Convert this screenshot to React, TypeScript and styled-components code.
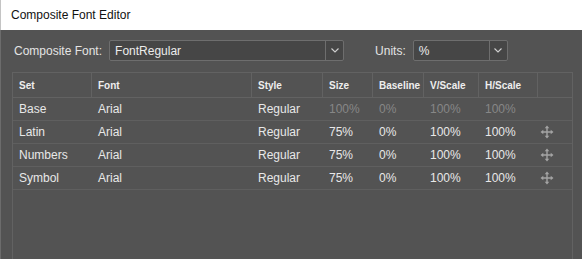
import styled, { createGlobalStyle } from "styled-components"

const GlobalStyle = createGlobalStyle`
	html, body {
		margin: 0;
		padding: 0;
		background: #535353;
		font-family: "Liberation Sans", Arial, sans-serif;
	}
`

type Row = {
	set: string
	font: string
	style: string
	size: string
	baseline: string
	vScale: string
	hScale: string
	locked?: boolean
}

const rows: Row[] = [
	{ set: "Base", font: "Arial", style: "Regular", size: "100%", baseline: "0%", vScale: "100%", hScale: "100%", locked: true },
	{ set: "Latin", font: "Arial", style: "Regular", size: "75%", baseline: "0%", vScale: "100%", hScale: "100%" },
	{ set: "Numbers", font: "Arial", style: "Regular", size: "75%", baseline: "0%", vScale: "100%", hScale: "100%" },
	{ set: "Symbol", font: "Arial", style: "Regular", size: "75%", baseline: "0%", vScale: "100%", hScale: "100%" },
]

const headers = ["Set", "Font", "Style", "Size", "Baseline", "V/Scale", "H/Scale", ""]

function Chevron() {
	return (
		<svg width="8" height="5" viewBox="0 0 8 5">
			<path d="M0.5 0.5 L4 4 L7.5 0.5" fill="none" stroke="#d0d0d0" strokeWidth="1.1" />
		</svg>
	)
}

function MoveIcon() {
	return (
		<svg width="14" height="14" viewBox="0 0 14 14">
			<path d="M7 3 V11 M3 7 H11" stroke="#a4a4a4" strokeWidth="1.4" fill="none" />
			<g fill="#a4a4a4">
				<path d="M7 0.5 L9.3 3.3 H4.7 Z" />
				<path d="M7 13.5 L9.3 10.7 H4.7 Z" />
				<path d="M0.5 7 L3.3 4.7 V9.3 Z" />
				<path d="M13.5 7 L10.7 4.7 V9.3 Z" />
			</g>
		</svg>
	)
}

export default function App() {
	return (
		<Window>
			<GlobalStyle />
			<TitleBar>Composite Font Editor</TitleBar>
			<Body>
				<Toolbar>
					<Label>Composite Font:</Label>
					<Select $width={235}>
						<SelectValue>FontRegular</SelectValue>
						<SelectArrow>
							<Chevron />
						</SelectArrow>
					</Select>
					<Label $gap={31}>Units:</Label>
					<Select $width={95}>
						<SelectValue>%</SelectValue>
						<SelectArrow>
							<Chevron />
						</SelectArrow>
					</Select>
				</Toolbar>
				<Table>
					<HeaderRow>
						{headers.map((h, i) => (
							<HeaderCell key={i} $first={i === 0}>
								{h}
							</HeaderCell>
						))}
					</HeaderRow>
					{rows.map((r) => (
						<DataRow key={r.set}>
							<Cell $first>{r.set}</Cell>
							<Cell>{r.font}</Cell>
							<Cell>{r.style}</Cell>
							<Cell $muted={r.locked}>{r.size}</Cell>
							<Cell $muted={r.locked}>{r.baseline}</Cell>
							<Cell $muted={r.locked}>{r.vScale}</Cell>
							<Cell $muted={r.locked}>{r.hScale}</Cell>
							<IconCell>{!r.locked && <MoveIcon />}</IconCell>
						</DataRow>
					))}
				</Table>
			</Body>
		</Window>
	)
}

const Window = styled.div`
	width: 582px;
	height: 259px;
	display: flex;
	flex-direction: column;
	overflow: hidden;
	box-sizing: border-box;
`

const TitleBar = styled.div`
	height: 30px;
	flex: none;
	display: flex;
	align-items: center;
	padding-left: 10px;
	background: #ffffff;
	border-left: 1px solid #c4c4c4;
	color: #111111;
	font-size: 12px;
`

const Body = styled.div`
	flex: 1;
	display: flex;
	flex-direction: column;
	gap: 11px;
	padding: 10px 0 0 11px;
	background: #535353;
	border-left: 1px solid #6c6c6c;
	min-height: 0;
`

const Toolbar = styled.div`
	display: flex;
	align-items: center;
	height: 21px;
`

const Label = styled.span<{ $gap?: number }>`
	color: #e4e4e4;
	font-size: 12px;
	margin-left: ${({ $gap }) => $gap ?? 2}px;
	margin-right: 7px;
`

const Select = styled.div<{ $width: number }>`
	width: ${({ $width }) => $width}px;
	height: 21px;
	box-sizing: border-box;
	display: flex;
	align-items: stretch;
	background: #464646;
	border: 1px solid #6e6e6e;
	border-radius: 2px;
`

const SelectValue = styled.span`
	flex: 1;
	display: flex;
	align-items: center;
	padding-left: 5px;
	color: #ececec;
	font-size: 12px;
`

const SelectArrow = styled.span`
	width: 17px;
	display: flex;
	align-items: center;
	justify-content: center;
	border-left: 1px solid #6e6e6e;
`

const Table = styled.div`
	width: 561px;
	flex: 1;
	box-sizing: border-box;
	border: 1px solid #626262;
	border-bottom: none;
	display: flex;
	flex-direction: column;
`

const columns = "78px 160px 71px 50px 51px 55px 59px 35px"

const HeaderRow = styled.div`
	display: grid;
	grid-template-columns: ${columns};
	height: 25px;
	box-sizing: border-box;
	border-bottom: 1px solid #626262;
`

const HeaderCell = styled.div<{ $first?: boolean }>`
	display: flex;
	align-items: center;
	padding-left: 6px;
	border-left: 1px solid ${({ $first }) => ($first ? "transparent" : "#626262")};
	margin-left: ${({ $first }) => ($first ? "-1px" : "0")};
	color: #eeeeee;
	font-size: 10px;
	font-weight: bold;
	white-space: nowrap;
`

const DataRow = styled.div`
	display: grid;
	grid-template-columns: ${columns};
	height: 23px;
	box-sizing: border-box;
	border-bottom: 1px solid #5f5f5f;
`

const Cell = styled.div<{ $first?: boolean; $muted?: boolean }>`
	display: flex;
	align-items: center;
	padding-left: ${({ $first }) => ($first ? 6 : 7)}px;
	color: ${({ $muted }) => ($muted ? "#878787" : "#e8e8e8")};
	font-size: 12px;
	white-space: nowrap;
`

const IconCell = styled.div`
	display: flex;
	align-items: center;
	padding-left: 3px;
`
